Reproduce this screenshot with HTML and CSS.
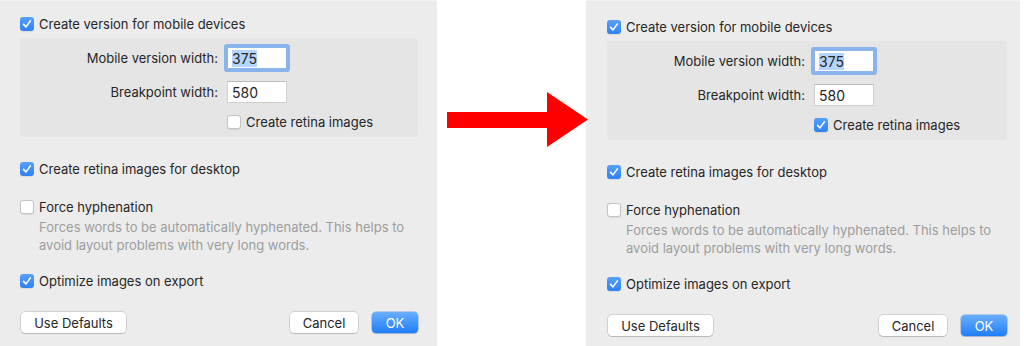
FILE: index.html
```html
<!DOCTYPE html>
<html lang="en">
<head>
    <meta charset="UTF-8">
    <title>Export Settings - Before and After</title>
    <link rel="stylesheet" href="styles.css">
</head>
<body>
    <div class="page">
        <section class="dialog dialog-before">
            <div class="check-row">
                <span class="check is-on"><svg viewBox="0 0 14 14"><path d="M3.6 7.4 L6 9.9 L10.4 3.9"/></svg></span>
                Create version for mobile devices
            </div>

            <div class="mobile-box">
                <span class="field-label">Mobile version width:</span>
                <span class="field is-focused"><span class="selected">375</span></span>
                <span class="field-label">Breakpoint width:</span>
                <span class="field">580</span>
                <div class="check-row retina-row">
                    <span class="check"></span>
                    Create retina images
                </div>
            </div>

            <div class="check-row desktop-row">
                <span class="check is-on"><svg viewBox="0 0 14 14"><path d="M3.6 7.4 L6 9.9 L10.4 3.9"/></svg></span>
                Create retina images for desktop
            </div>

            <div class="check-row hyphen-row">
                <span class="check"></span>
                Force hyphenation
            </div>
            <p class="hint">Forces words to be automatically hyphenated. This helps to<br>avoid layout problems with very long words.</p>

            <div class="check-row optimize-row">
                <span class="check is-on"><svg viewBox="0 0 14 14"><path d="M3.6 7.4 L6 9.9 L10.4 3.9"/></svg></span>
                Optimize images on export
            </div>

            <div class="buttons">
                <button class="btn btn-defaults">Use Defaults</button>
                <button class="btn btn-cancel">Cancel</button>
                <button class="btn btn-primary">OK</button>
            </div>
        </section>

        <div class="arrow-col">
            <svg class="arrow" width="141" height="55" viewBox="0 0 141 55">
                <polygon points="0,20 100,20 100,0 141,27.5 100,55 100,36 0,36"/>
            </svg>
        </div>

        <section class="dialog dialog-after">
            <div class="check-row">
                <span class="check is-on"><svg viewBox="0 0 14 14"><path d="M3.6 7.4 L6 9.9 L10.4 3.9"/></svg></span>
                Create version for mobile devices
            </div>

            <div class="mobile-box">
                <span class="field-label">Mobile version width:</span>
                <span class="field is-focused"><span class="selected">375</span></span>
                <span class="field-label">Breakpoint width:</span>
                <span class="field">580</span>
                <div class="check-row retina-row">
                    <span class="check is-on"><svg viewBox="0 0 14 14"><path d="M3.6 7.4 L6 9.9 L10.4 3.9"/></svg></span>
                    Create retina images
                </div>
            </div>

            <div class="check-row desktop-row">
                <span class="check is-on"><svg viewBox="0 0 14 14"><path d="M3.6 7.4 L6 9.9 L10.4 3.9"/></svg></span>
                Create retina images for desktop
            </div>

            <div class="check-row hyphen-row">
                <span class="check"></span>
                Force hyphenation
            </div>
            <p class="hint">Forces words to be automatically hyphenated. This helps to<br>avoid layout problems with very long words.</p>

            <div class="check-row optimize-row">
                <span class="check is-on"><svg viewBox="0 0 14 14"><path d="M3.6 7.4 L6 9.9 L10.4 3.9"/></svg></span>
                Optimize images on export
            </div>

            <div class="buttons">
                <button class="btn btn-defaults">Use Defaults</button>
                <button class="btn btn-cancel">Cancel</button>
                <button class="btn btn-primary">OK</button>
            </div>
        </section>
    </div>
</body>
</html>
```

FILE: styles.css
```css
:root {
    --panel-bg: #ececec;
    --box-bg: #e5e5e5;
    --text: #262626;
    --hint: #9d9d9d;
}

body {
    margin: 0;
    background: #ffffff;
    font-family: 'Inter', 'Liberation Sans', sans-serif;
    font-size: 13px;
    color: var(--text);
}

.page {
    display: flex;
    height: 346px;
    overflow: hidden;
}

.dialog {
    display: flex;
    flex-direction: column;
    box-sizing: border-box;
    background: var(--panel-bg);
    border-top: 1px solid #f4f4f4;
}

.dialog-before {
    width: 437px;
    padding: 16px 19px 0 20px;
}

.dialog-after {
    width: 434px;
    padding: 19px 13px 0 21px;
}

.check-row {
    display: flex;
    align-items: center;
    gap: 5px;
    height: 14px;
    line-height: 14px;
    white-space: nowrap;
}

.check {
    flex: none;
    width: 14px;
    height: 14px;
    box-sizing: border-box;
    border-radius: 3px;
    background: #ffffff;
    border: 1px solid #c4c4c4;
    box-shadow: 0 0.5px 1px rgba(0, 0, 0, 0.08);
}

.check.is-on {
    border: none;
    background: linear-gradient(#58a0f8, #2f82f4);
}

.check svg {
    display: block;
    width: 14px;
    height: 14px;
}

.check path {
    fill: none;
    stroke: #ffffff;
    stroke-width: 1.6;
    stroke-linecap: round;
    stroke-linejoin: round;
}

.mobile-box {
    display: grid;
    grid-template-columns: 198px 60px 1fr;
    grid-template-rows: 22px 22px 14px;
    column-gap: 9px;
    row-gap: 12px;
    align-items: center;
    margin-top: 7px;
    padding: 9px 0 8px;
    background: var(--box-bg);
    border-radius: 4px;
}

.field-label {
    grid-column: 1;
    text-align: right;
}

.field {
    grid-column: 2;
    box-sizing: border-box;
    height: 22px;
    padding: 0 4px;
    line-height: 21px;
    font-size: 14px;
    background: #ffffff;
    border: 1px solid #cfcfcf;
    border-top-color: #bdbdbd;
}

.field.is-focused {
    border-color: #8cb5ec;
    border-radius: 1px;
    box-shadow: 0 0 0 3px rgba(120, 170, 238, 0.85);
}

.selected {
    background: #b4d5fe;
}

.retina-row {
    grid-column: 2 / 4;
}

.desktop-row {
    margin-top: 25px;
}

.hyphen-row {
    margin-top: 24px;
}

.hint {
    margin: 4px 0 0 19px;
    line-height: 18px;
    color: var(--hint);
    white-space: nowrap;
}

.optimize-row {
    margin-top: 20px;
}

.buttons {
    display: flex;
    gap: 14px;
    margin-top: 24px;
}

.btn {
    height: 21px;
    padding: 0;
    font-family: inherit;
    font-size: 13px;
    color: var(--text);
    background: #ffffff;
    border: none;
    border-radius: 4px;
    box-shadow: 0 0 0 0.5px rgba(0, 0, 0, 0.22), 0 1px 1px rgba(0, 0, 0, 0.12);
}

.btn-defaults {
    width: 105px;
    margin-left: 1px;
}

.btn-cancel {
    width: 68px;
    margin-left: auto;
}

.btn-primary {
    width: 46px;
    color: #ffffff;
    background: linear-gradient(#6aaefb, #1f7ef6);
    box-shadow: 0 0 0 0.5px rgba(20, 100, 220, 0.5), 0 1px 1px rgba(0, 0, 0, 0.12);
}

.arrow-col {
    position: relative;
    z-index: 1;
    flex: 0 0 149px;
    box-sizing: border-box;
    padding: 92px 0 0 10px;
}

.arrow {
    display: block;
    margin-right: -2px;
    fill: #ff0000;
}
```
